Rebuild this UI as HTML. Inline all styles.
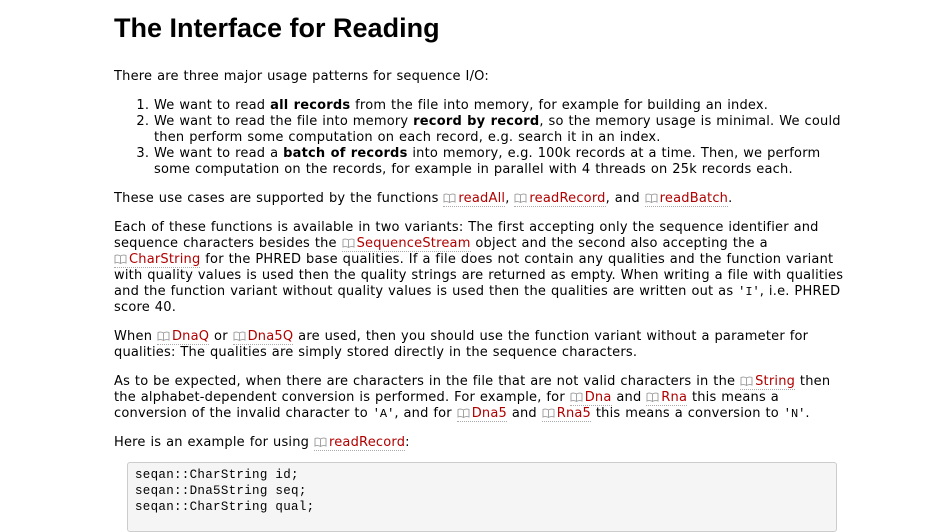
<!DOCTYPE html>
<html><head><meta charset="utf-8"><style>
body{margin:0;background:#fff;font-family:"DejaVu Sans",Verdana,sans-serif;font-size:13px;color:#000;letter-spacing:0.2px;word-spacing:0.5px;}
.w{position:absolute;left:114px;top:2px;width:760px;}
h1{font-family:"Liberation Sans",Arial,sans-serif;font-weight:bold;font-size:27px;margin:0;position:absolute;top:11px;left:0;letter-spacing:0;word-spacing:0;}
p{margin:0;line-height:16px;position:absolute;left:0;white-space:nowrap;}
ol{margin:0;padding-left:40px;line-height:16px;position:absolute;left:0;top:96px;white-space:nowrap;}
a{color:#b00000;text-decoration:none;border-bottom:1px dotted #aaa;}
.i{display:inline-block;width:13px;height:10px;margin-right:2px;vertical-align:-1px;}
code{font-family:"Liberation Mono",monospace;font-size:12px;letter-spacing:0;}
pre{position:absolute;left:13px;top:460px;width:694px;height:60px;margin:0;background:#f5f5f5;border:1px solid #ccc;border-radius:3px;padding:4px 7px;font-family:"Liberation Mono",monospace;font-size:12.5px;line-height:16px;color:#000;letter-spacing:0.3px;word-spacing:0;}
</style></head><body>
<svg width="0" height="0" style="position:absolute"><defs><symbol id="b" viewBox="0 0 13 10"><path d="M6.5 2C5 1 2.5 0.8 1 1.5V9C2.5 8.3 5 8.5 6.5 9.5C8 8.5 10.5 8.3 12 9V1.5C10.5 0.8 8 1 6.5 2ZM6.5 2V9.5" fill="none" stroke="#999" stroke-width="0.9"/></symbol></defs></svg>
<div class="w">
<h1>The Interface for Reading</h1>
<p style="top:67px">There are three major usage patterns for sequence I/O:</p>
<ol>
<li>We want to read <b>all records</b> from the file into memory, for example for building an index.</li>
<li>We want to read the file into memory <b>record by record</b>, so the memory usage is minimal. We could<br>then perform some computation on each record, e.g. search it in an index.</li>
<li>We want to read a <b>batch of records</b> into memory, e.g. 100k records at a time. Then, we perform<br>some computation on the records, for example in parallel with 4 threads on 25k records each.</li>
</ol>
<p style="top:189px">These use cases are supported by the functions <a><svg class="i"><use href="#b"/></svg>readAll</a>, <a><svg class="i"><use href="#b"/></svg>readRecord</a>, and <a><svg class="i"><use href="#b"/></svg>readBatch</a>.</p>
<p style="top:218px">Each of these functions is available in two variants: The first accepting only the sequence identifier and<br>sequence characters besides the <a><svg class="i"><use href="#b"/></svg>SequenceStream</a> object and the second also accepting the a<br><a><svg class="i"><use href="#b"/></svg>CharString</a> for the PHRED base qualities. If a file does not contain any qualities and the function variant<br>with quality values is used then the quality strings are returned as empty. When writing a file with qualities<br>and the function variant without quality values is used then the qualities are written out as <code>'I'</code>, i.e. PHRED<br>score 40.</p>
<p style="top:327px">When <a><svg class="i"><use href="#b"/></svg>DnaQ</a> or <a><svg class="i"><use href="#b"/></svg>Dna5Q</a> are used, then you should use the function variant without a parameter for<br>qualities: The qualities are simply stored directly in the sequence characters.</p>
<p style="top:372px">As to be expected, when there are characters in the file that are not valid characters in the <a><svg class="i"><use href="#b"/></svg>String</a> then<br>the alphabet-dependent conversion is performed. For example, for <a><svg class="i"><use href="#b"/></svg>Dna</a> and <a><svg class="i"><use href="#b"/></svg>Rna</a> this means a<br>conversion of the invalid character to <code>'A'</code>, and for <a><svg class="i"><use href="#b"/></svg>Dna5</a> and <a><svg class="i"><use href="#b"/></svg>Rna5</a> this means a conversion to <code>'N'</code>.</p>
<p style="top:433px">Here is an example for using <a><svg class="i"><use href="#b"/></svg>readRecord</a>:</p>
<pre>seqan::CharString id;
seqan::Dna5String seq;
seqan::CharString qual;</pre>
</div>
</body></html>
